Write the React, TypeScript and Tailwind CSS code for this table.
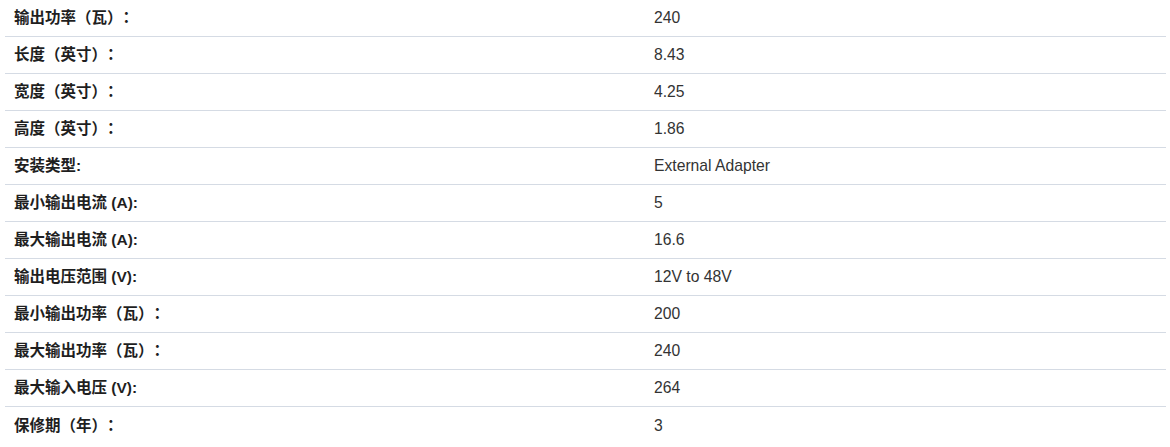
import React from "react"

const specs: [string, string][] = [
  ["输出功率（瓦）：", "240"],
  ["长度（英寸）：", "8.43"],
  ["宽度（英寸）：", "4.25"],
  ["高度（英寸）：", "1.86"],
  ["安装类型:", "External Adapter"],
  ["最小输出电流 (A):", "5"],
  ["最大输出电流 (A):", "16.6"],
  ["输出电压范围 (V):", "12V to 48V"],
  ["最小输出功率（瓦）：", "200"],
  ["最大输出功率（瓦）：", "240"],
  ["最大输入电压 (V):", "264"],
  ["保修期（年）：", "3"],
]

export default function App() {
  return (
    <div className="min-h-screen bg-white font-['Liberation_Sans','Noto_Sans_CJK_SC',sans-serif] [text-spacing-trim:space-all]">
      <div className="mx-[5px] w-[1161px]">
        {specs.map(([label, value], index) => (
          <div
            key={index}
            className={`grid h-[37px] grid-cols-[640px_1fr] items-center ${index < specs.length - 1 ? "border-b border-[#d5dbe4]" : ""}`}
          >
            <div className="px-[9px] text-[15.5px] font-bold text-[#1f1f1f]">{label}</div>
            <div className="px-[9px] text-[15.7px] text-[#333]">{value}</div>
          </div>
        ))}
      </div>
    </div>
  )
}
